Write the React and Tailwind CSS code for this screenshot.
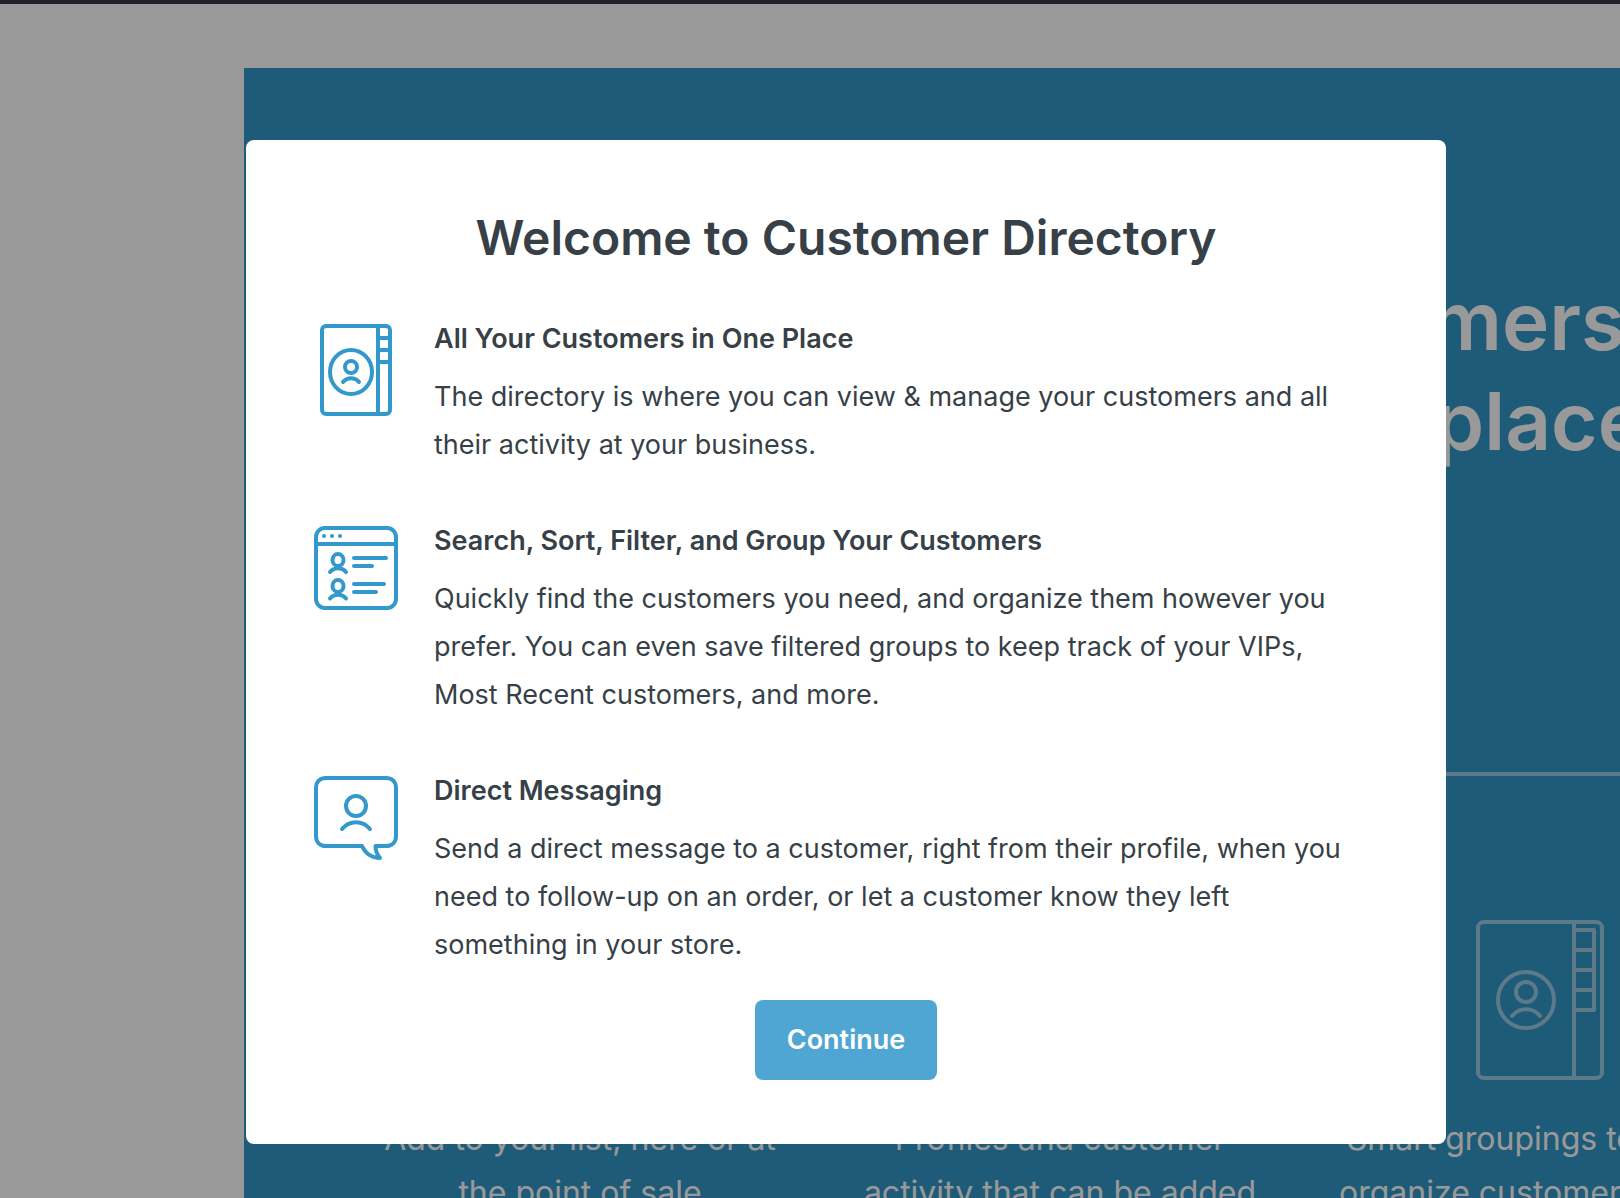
function DirectoryIcon() {
  return (
    <svg width="72" height="92" viewBox="0 0 72 92" fill="none" stroke="currentColor" strokeWidth="4" aria-hidden="true">
      <rect x="2" y="2" width="68" height="88" rx="4" />
      <path d="M58 2v88M58 14h12M58 26h12M58 38h12" />
      <ellipse cx="31" cy="48" rx="21" ry="22" />
      <circle cx="31" cy="43" r="6" />
      <path d="M23 58c4-5 12-5 16 0" strokeLinecap="round" />
    </svg>
  );
}

function ListIcon() {
  return (
    <svg width="84" height="84" viewBox="0 0 84 84" fill="none" stroke="currentColor" strokeWidth="4" strokeLinecap="round" aria-hidden="true">
      <rect x="2" y="2" width="80" height="80" rx="9" />
      <path d="M2 18h80" />
      <g fill="currentColor" stroke="none">
        <circle cx="10" cy="10" r="2" />
        <circle cx="18" cy="10" r="2" />
        <circle cx="26" cy="10" r="2" />
      </g>
      <ellipse cx="24" cy="34" rx="5.5" ry="6" />
      <path d="M16 46c4-5 12-5 16 0" />
      <ellipse cx="24" cy="60" rx="5.5" ry="6" />
      <path d="M16 72.500c4-5 12-5 16 0" />
      <path d="M40 32h32M40 40h18M40 58h30M40 66h22" />
    </svg>
  );
}

function MessageIcon() {
  return (
    <svg width="84" height="84" viewBox="0 0 84 84" fill="none" stroke="currentColor" strokeWidth="4" strokeLinecap="round" strokeLinejoin="round" aria-hidden="true">
      <path d="M48 70H12C6 70 2 66 2 60V12C2 6 6 2 12 2h60c6 0 10 4 10 10v48c0 6-4 10-10 10H61.500c0 4.500 2 9 4.500 12C57.500 82 51.500 77.500 48 70z" />
      <circle cx="42" cy="30" r="10" />
      <path d="M28 53c7.500-9 20.500-9 28 0" />
    </svg>
  );
}

function NotebookIcon() {
  return (
    <svg className="opacity-50" width="128" height="160" viewBox="0 0 128 160" fill="none" stroke="currentColor" strokeWidth="4" aria-hidden="true">
      <rect x="2" y="2" width="124" height="156" rx="6" />
      <path d="M98 2v156M98 10h20v80H98M98 30h20M98 50h20M98 70h20" strokeLinejoin="round" />
      <circle cx="50" cy="80" r="28" />
      <circle cx="50" cy="72" r="10" />
      <path d="M36 96c7-9 21-9 28 0" strokeLinecap="round" />
    </svg>
  );
}

const features = [
  {
    title: "All Your Customers in One Place",
    text: "The directory is where you can view & manage your customers and all their activity at your business.",
    Icon: DirectoryIcon,
  },
  {
    title: "Search, Sort, Filter, and Group Your Customers",
    text: "Quickly find the customers you need, and organize them however you prefer. You can even save filtered groups to keep track of your VIPs, Most Recent customers, and more.",
    Icon: ListIcon,
  },
  {
    title: "Direct Messaging",
    text: "Send a direct message to a customer, right from their profile, when you need to follow-up on an order, or let a customer know they left something in your store.",
    Icon: MessageIcon,
  },
];

const benefits = [
  ["Add to your list, here or at", "the point of sale"],
  ["Profiles and customer", "activity that can be added"],
  ["Smart groupings to better", "organize customers by tag"],
];

export default function App() {
  return (
    <div className="relative h-screen overflow-hidden bg-white font-['Inter','Liberation_Sans',sans-serif]">
      <div className="h-1 bg-[#353b45]" />
      <main className="mt-16 ml-[244px] min-h-screen w-[1632px] bg-[#3298c8] px-24 text-white">
        <h1 className="flex h-[704px] flex-col items-center pt-[203px] text-[80px] leading-[100px] font-semibold">
          <span>Keep tabs on your customers</span>
          <span>and their invoices in one place</span>
        </h1>
        <div className="h-1 bg-white/50" />
        <div className="grid grid-cols-3 pt-36 text-center text-[32px] leading-[54px]">
          {benefits.map(([first, second]) => (
            <div key={first} className="flex flex-col items-center gap-8">
              <NotebookIcon />
              <p>
                {first}
                <br />
                {second}
              </p>
            </div>
          ))}
        </div>
      </main>

      <div className="absolute inset-0 bg-black/40 pt-[140px] pl-[246px]">
        <div
          role="dialog"
          aria-modal="true"
          aria-labelledby="welcome-title"
          className="flex w-full max-w-[1200px] flex-col items-center rounded-lg bg-white p-16 text-[#373f47]"
        >
          <h2 id="welcome-title" className="text-[48px] leading-[68px] font-semibold">
            Welcome to Customer Directory
          </h2>
          <ul className="mt-[43px] flex flex-col gap-12 self-stretch pr-6 text-[27px] leading-[48px]">
            {features.map(({ title, text, Icon }) => (
              <li key={title} className="flex gap-8">
                <div className="flex w-[92px] shrink-0 justify-center pt-[9px] text-[#3399cc]">
                  <Icon />
                </div>
                <div className="flex flex-1 flex-col gap-2.5">
                  <h3 className="font-semibold">{title}</h3>
                  <p>{text}</p>
                </div>
              </li>
            ))}
          </ul>
          <button type="button" className="mt-[31px] rounded-lg bg-[#50a6d3] px-8 py-4 text-[27px] leading-[48px] font-semibold text-white">
            Continue
          </button>
        </div>
      </div>
    </div>
  );
}
